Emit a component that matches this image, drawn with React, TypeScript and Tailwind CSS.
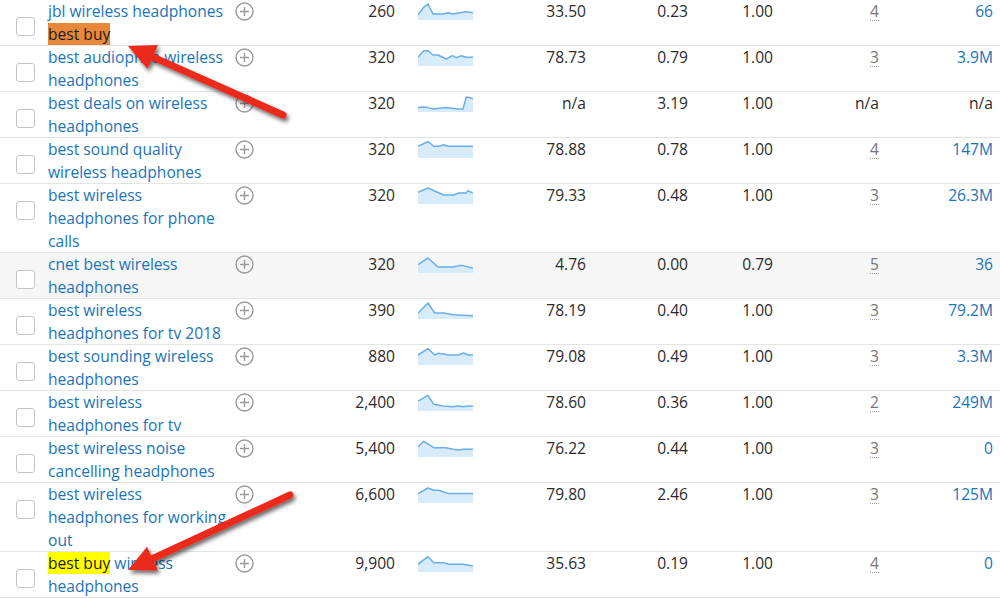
import type { ReactNode } from 'react';

type Row = {
    lines: ReactNode[];
    vol: string;
    spark: number[][];
    kd: string;
    cpc: string;
    com: string;
    comp: string;
    res: string;
    shaded?: boolean;
};

const orange = <span className="bg-[#e8883a] text-[#1b1b1b]">best buy</span>;
const yellow = <span className="bg-[#ffff00] text-[#1b1b1b]">best buy</span>;

const rows: Row[] = [
    {
        lines: ['jbl wireless headphones', orange], vol: '260', kd: '33.50', cpc: '0.23', com: '1.00', comp: '4', res: '66',
        spark: [[0, 12], [5.7, 4.3], [10, 1], [15, 11], [25, 11], [30, 9.7], [35, 11], [41.7, 9.7], [48, 8.7], [55, 9.7]],
    },
    {
        lines: ['best audiophile wireless', 'headphones'], vol: '320', kd: '78.73', cpc: '0.79', com: '1.00', comp: '3', res: '3.9M',
        spark: [[0, 8.3], [5.7, 1.7], [10, 1.7], [15, 6], [20, 6], [28.3, 10], [34.3, 6.7], [38, 8.7], [43.3, 6.7], [48, 8.3], [55, 8.3]],
    },
    {
        lines: ['best deals on wireless', 'headphones'], vol: '320', kd: 'n/a', cpc: '3.19', com: '1.00', comp: 'n/a', res: 'n/a',
        spark: [[0, 12.6], [5, 12], [10, 12.6], [15, 14], [28, 12.6], [40, 14], [45, 14], [48.3, 2], [55, 3.6]],
    },
    {
        lines: ['best sound quality', 'wireless headphones'], vol: '320', kd: '78.88', cpc: '0.78', com: '1.00', comp: '4', res: '147M',
        spark: [[0, 5.3], [10, 0.5], [15.7, 5.3], [21, 5.3], [25.7, 3.7], [29.7, 5.3], [55, 5.3]],
    },
    {
        lines: ['best wireless', 'headphones for phone', 'calls'], vol: '320', kd: '79.33', cpc: '0.48', com: '1.00', comp: '3', res: '26.3M',
        spark: [[0, 5.4], [10, 1], [25.7, 8], [35.7, 8], [40.7, 6], [48, 6], [50, 3.7], [55, 6]],
    },
    {
        lines: ['cnet best wireless', 'headphones'], vol: '320', kd: '4.76', cpc: '0.00', com: '0.79', comp: '5', res: '36', shaded: true,
        spark: [[0, 8.6], [10, 2], [20, 11], [35.7, 11], [40.7, 9.6], [45, 9.6], [55, 12.3]],
    },
    {
        lines: ['best wireless', 'headphones for tv 2018'], vol: '390', kd: '78.19', cpc: '0.40', com: '1.00', comp: '3', res: '79.2M',
        spark: [[0, 11], [10, 1], [16.7, 11], [25.7, 11], [35, 12.7], [55, 13.7]],
    },
    {
        lines: ['best sounding wireless', 'headphones'], vol: '880', kd: '79.08', cpc: '0.49', com: '1.00', comp: '3', res: '3.3M',
        spark: [[0, 7], [10, 0.5], [16.7, 7], [20, 5.3], [25.7, 6], [30, 7], [40, 7], [45.7, 5], [50, 7], [55, 7]],
    },
    {
        lines: ['best wireless', 'headphones for tv'], vol: '2,400', kd: '78.60', cpc: '0.36', com: '1.00', comp: '2', res: '249M',
        spark: [[0, 7], [10, 1.3], [15.7, 10.3], [25, 12], [35, 12.7], [40, 12], [45, 12.7], [50, 12], [55, 12]],
    },
    {
        lines: ['best wireless noise', 'cancelling headphones'], vol: '5,400', kd: '76.22', cpc: '0.44', com: '1.00', comp: '3', res: '0',
        spark: [[0, 7], [5.7, 1.3], [15.7, 7.7], [28, 7.7], [35, 9.3], [40, 10], [45, 9.3], [50, 9.3], [55, 9.3]],
    },
    {
        lines: ['best wireless', 'headphones for working', 'out'], vol: '6,600', kd: '79.80', cpc: '2.46', com: '1.00', comp: '3', res: '125M',
        spark: [[0, 7.6], [10, 2], [15.7, 4.3], [20.7, 4.3], [30.7, 7.6], [55, 7.6]],
    },
    {
        lines: [<>{yellow} wireless</>, 'headphones'], vol: '9,900', kd: '35.63', cpc: '0.19', com: '1.00', comp: '4', res: '0',
        spark: [[0, 9.3], [10, 1.7], [15.7, 7.7], [25.7, 7.7], [30.7, 9.3], [45, 9.3], [55, 11]],
    },
];

function Sparkline({ pts }: { pts: number[][] }) {
    const line = pts.map(p => `${p[0]},${p[1]}`).join(' ');
    const area = `0,17 ${line} 55,17`;
    return (
        <svg width="55" height="17" viewBox="0 0 55 17" className="block">
            <polygon points={area} fill="#d8ebfa" />
            <polyline points={line} fill="none" stroke="#6aaeea" strokeWidth="1.5" strokeLinejoin="round" />
        </svg>
    );
}

function PlusCircle() {
    return (
        <svg width="19" height="19" viewBox="0 0 19 19" className="block">
            <circle cx="9.5" cy="9.5" r="8.5" fill="none" stroke="#9a9a9a" strokeWidth="1.4" />
            <path d="M9.5 5v9M5 9.5h9" stroke="#9a9a9a" strokeWidth="1.4" />
        </svg>
    );
}

function Arrow({ x1, y1, x2, y2 }: { x1: number; y1: number; x2: number; y2: number }) {
    const dx = x2 - x1;
    const dy = y2 - y1;
    const len = Math.hypot(dx, dy);
    const ux = dx / len;
    const uy = dy / len;
    const px = -uy;
    const py = ux;
    const headLen = 27;
    const half = 13;
    const bx = x2 - ux * headLen;
    const by = y2 - uy * headLen;
    const head = `${x2},${y2} ${bx + px * half},${by + py * half} ${bx - px * half},${by - py * half}`;
    return (
        <g filter="url(#arrowShadow)">
            <line x1={x1} y1={y1} x2={bx + ux * 2} y2={by + uy * 2} stroke="#ec2a1c" strokeWidth="7" strokeLinecap="round" />
            <polygon points={head} fill="#ec2a1c" />
        </g>
    );
}

export default function App() {
    return (
        <div className="relative w-[1000px] h-[599px] overflow-hidden bg-white text-[15.6px] leading-[23px] text-[#2b2b2b]" style={{ fontFamily: '"Open Sans", "Noto Sans", sans-serif' }}>
            {rows.map((row, i) => (
                <div
                    key={i}
                    className={`flex border-b border-[#e3e5e3] ${row.lines.length === 3 ? 'h-[69px]' : 'h-[46px]'} ${row.shaded ? 'bg-[#f5f6f5]' : 'bg-white'}`}
                >
                    <div className="w-[48px] shrink-0 pl-[16px] pt-[17px]">
                        <div className="w-[19px] h-[19px] rounded-[3px] border border-[#c4c4c4] bg-white" />
                    </div>
                    <div className="w-[187px] shrink-0 text-[#1a74ba] whitespace-nowrap">
                        {row.lines.map((l, j) => (
                            <div key={j}>{l}</div>
                        ))}
                    </div>
                    <div className="w-[20px] shrink-0 pt-[2px]">
                        <PlusCircle />
                    </div>
                    <div className="w-[140px] shrink-0 text-right">{row.vol}</div>
                    <div className="w-[78px] shrink-0 pl-[23px] pt-[3px]">
                        <Sparkline pts={row.spark} />
                    </div>
                    <div className="w-[113px] shrink-0 text-right">{row.kd}</div>
                    <div className="w-[102px] shrink-0 text-right">{row.cpc}</div>
                    <div className="w-[85px] shrink-0 text-right">{row.com}</div>
                    <div className="w-[106px] shrink-0 text-right">
                        {row.comp === 'n/a' ? (
                            'n/a'
                        ) : (
                            <span className="inline-block leading-[18px] text-[#777] border-b border-dotted border-[#999]">{row.comp}</span>
                        )}
                    </div>
                    <div className={`w-[114px] shrink-0 text-right ${row.res === 'n/a' ? 'text-[#2b2b2b]' : 'text-[#1a74ba]'}`}>{row.res}</div>
                </div>
            ))}

            {/* callout arrows */}
            <svg className="absolute inset-0 pointer-events-none" width="1000" height="599">
                <defs>
                    <filter id="arrowShadow" x="-20%" y="-50%" width="140%" height="200%">
                        <feDropShadow dx="2" dy="3" stdDeviation="2.2" floodColor="#000" floodOpacity="0.6" />
                    </filter>
                </defs>
                <Arrow x1={283} y1={115} x2={128} y2={46} />
                <Arrow x1={290} y1={495} x2={128} y2={570} />
            </svg>
        </div>
    );
}
